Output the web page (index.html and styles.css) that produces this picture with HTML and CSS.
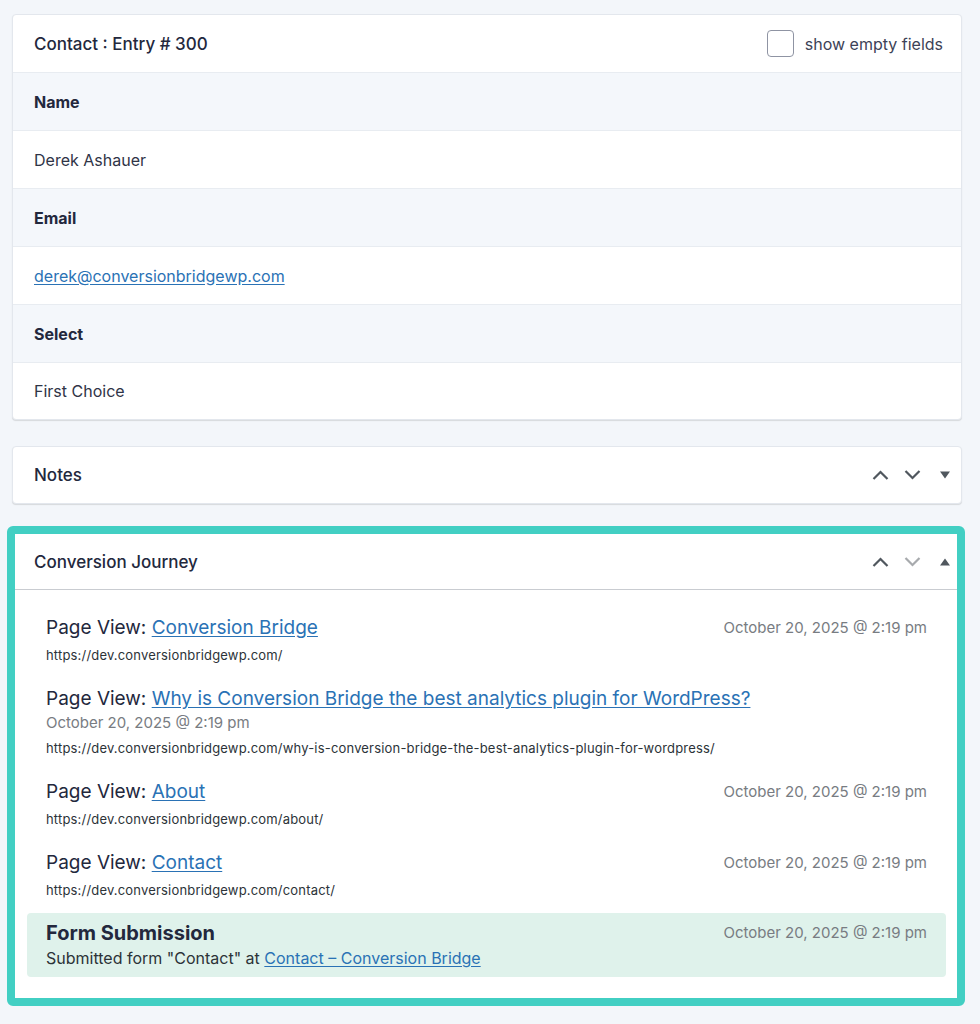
FILE: index.html
```html
<!DOCTYPE html>
<html lang="en">
<head>
<meta charset="utf-8">
<title>Entry #300</title>
<link rel="stylesheet" href="styles.css">
</head>
<body>
<div class="page">
  <section class="card entry-card">
    <header class="card-head">
      <h2 class="card-title">Contact : Entry # 300</h2>
      <label class="toggle"><span class="checkbox"></span><span>show empty fields</span></label>
    </header>
    <div class="row label-row">Name</div>
    <div class="row value-row">Derek Ashauer</div>
    <div class="row label-row">Email</div>
    <div class="row value-row"><a href="#" class="link">derek@conversionbridgewp.com</a></div>
    <div class="row label-row">Select</div>
    <div class="row value-row last">First Choice</div>
  </section>

  <section class="card notes-card">
    <header class="card-head plain">
      <h2 class="card-title">Notes</h2>
      <div class="controls">
        <svg class="chev" width="17" height="10" viewBox="0 0 17 10"><path d="M1.5 9 L8.5 2 L15.5 9" fill="none" stroke="#50575e" stroke-width="2.2"/></svg>
        <svg class="chev" width="17" height="10" viewBox="0 0 17 10"><path d="M1.5 1 L8.5 8 L15.5 1" fill="none" stroke="#50575e" stroke-width="2.2"/></svg>
        <svg class="tri" width="10" height="8" viewBox="0 0 10 8"><path d="M0 0.5 H10 L5 7.5 Z" fill="#50575e"/></svg>
      </div>
    </header>
  </section>

  <div class="highlight">
    <section class="journey">
      <header class="journey-head">
        <h2 class="card-title">Conversion Journey</h2>
        <div class="controls">
          <svg class="chev" width="17" height="10" viewBox="0 0 17 10"><path d="M1.5 9 L8.5 2 L15.5 9" fill="none" stroke="#50575e" stroke-width="2.2"/></svg>
          <svg class="chev" width="17" height="10" viewBox="0 0 17 10"><path d="M1.5 1 L8.5 8 L15.5 1" fill="none" stroke="#a7aaad" stroke-width="2.2"/></svg>
          <svg class="tri" width="10" height="8" viewBox="0 0 10 8"><path d="M0 7.5 H10 L5 0.5 Z" fill="#50575e"/></svg>
        </div>
      </header>
      <div class="journey-body">
        <div class="step">
          <div class="step-top">
            <div class="step-title">Page View: <a href="#" class="link">Conversion Bridge</a></div>
            <div class="step-date">October 20, 2025 @ 2:19 pm</div>
          </div>
          <div class="step-url">https://dev.conversionbridgewp.com/</div>
        </div>
        <div class="step">
          <div class="step-top">
            <div class="step-title">Page View: <a href="#" class="link">Why is Conversion Bridge the best analytics plugin for WordPress?</a></div>
            <div class="step-date">October 20, 2025 @ 2:19 pm</div>
          </div>
          <div class="step-url">https://dev.conversionbridgewp.com/why-is-conversion-bridge-the-best-analytics-plugin-for-wordpress/</div>
        </div>
        <div class="step">
          <div class="step-top">
            <div class="step-title">Page View: <a href="#" class="link">About</a></div>
            <div class="step-date">October 20, 2025 @ 2:19 pm</div>
          </div>
          <div class="step-url">https://dev.conversionbridgewp.com/about/</div>
        </div>
        <div class="step">
          <div class="step-top">
            <div class="step-title">Page View: <a href="#" class="link">Contact</a></div>
            <div class="step-date">October 20, 2025 @ 2:19 pm</div>
          </div>
          <div class="step-url">https://dev.conversionbridgewp.com/contact/</div>
        </div>
        <div class="step conversion">
          <div class="step-top">
            <div class="step-title strong">Form Submission</div>
            <div class="step-date">October 20, 2025 @ 2:19 pm</div>
          </div>
          <div class="step-desc">Submitted form "Contact" at <a href="#" class="link">Contact – Conversion Bridge</a></div>
        </div>
      </div>
    </section>
  </div>
</div>
</body>
</html>
```

FILE: styles.css
```css
* { box-sizing: border-box; }
html, body { margin: 0; padding: 0; }
body {
  background: #f3f6fa;
  font-family: Inter, "Noto Sans", "Liberation Sans", sans-serif;
  color: #23283d;
  width: 980px;
  height: 1024px;
  overflow: hidden;
}
.page {
  padding: 14px 0 0 0;
}
.card {
  margin-left: 12px;
  width: 950px;
  background: #fff;
  border: 1px solid #e3e7ed;
  border-radius: 4px;
  box-shadow: 0 1px 1px rgba(0, 0, 0, 0.12);
}
.card-head {
  height: 58px;
  display: flex;
  align-items: center;
  justify-content: space-between;
  padding: 0 18px 0 21px;
  border-bottom: 1px solid #e8ecf1;
}
.card-head.plain { border-bottom: none; height: 56px; padding-right: 11px; }
.card-title {
  margin: 0;
  font-size: 17px;
  font-weight: 500;
  color: #23283d;
}
.toggle {
  display: flex;
  align-items: center;
  gap: 11px;
  font-size: 16px;
  color: #3c4257;
}
.checkbox {
  width: 27px;
  height: 27px;
  border: 1.5px solid #8f94a3;
  border-radius: 4px;
  background: #fff;
}
.row {
  height: 58px;
  display: flex;
  align-items: center;
  padding: 0 21px;
  font-size: 16px;
  border-bottom: 1px solid #e8ecf1;
}
.row.last { border-bottom: none; height: 56px; }
.label-row {
  background: #f4f7fb;
  font-weight: 700;
  color: #23283d;
}
.value-row { color: #2f3447; }
.link {
  color: #2a72b5;
  text-decoration: underline;
  text-underline-offset: 2px;
}
.notes-card { margin-top: 26px; }
.controls {
  display: flex;
  align-items: center;
}
.controls .chev { margin-right: 15px; }
.controls .tri { margin-left: 4px; }

.highlight {
  margin: 22px 0 0 7px;
  width: 958px;
  border: 8px solid #42cfc3;
  border-radius: 6px;
  background: #fff;
}
.journey { background: #fff; }
.journey-head {
  height: 56px;
  display: flex;
  align-items: center;
  justify-content: space-between;
  padding: 0 7px 0 19px;
  border-bottom: 1px solid #c9ccd1;
}
.journey-body {
  padding: 17px 11px 21px 12px;
}
.step {
  padding: 8px 19px;
}
.step-top {
  display: flex;
  flex-wrap: wrap;
  align-items: center;
  justify-content: space-between;
  column-gap: 20px;
}
.step-title {
  font-size: 19px;
  line-height: 26px;
  color: #23283d;
}
.step-title.strong { font-size: 20px; font-weight: 700; }
.step-date {
  font-size: 15px;
  line-height: 22px;
  color: #787c82;
}
.step-url {
  font-size: 13px;
  letter-spacing: 0.18px;
  line-height: 20px;
  margin: 4px 0 5px;
  color: #2c3338;
}
.step.conversion {
  background: #dff2eb;
  border-radius: 4px;
  padding: 7px 19px 7px;
}
.step-desc {
  font-size: 16px;
  line-height: 24px;
  color: #2c3338;
}
```
